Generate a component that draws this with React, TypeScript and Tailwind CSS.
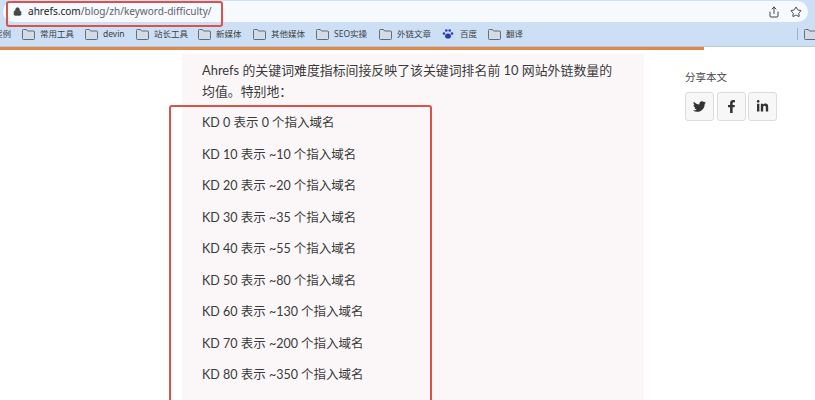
import React from 'react';
import { Lock, Share, Star } from 'lucide-react';
import { FaTwitter, FaFacebookF, FaLinkedinIn } from 'react-icons/fa';

const font = { fontFamily: '"Noto Sans", "Noto Sans CJK SC", sans-serif' };
const articleFont = { fontFamily: 'Lato, "Noto Sans CJK SC", sans-serif' };

const Folder: React.FC = () => (
  <svg width="13" height="11" viewBox="0 0 14 11" preserveAspectRatio="none" className="shrink-0" fill="#d3dbe6" stroke="#5f6670" strokeWidth="1">
    <path d="M.5 9.5V1.5a1 1 0 0 1 1-1h3.2l1.3 1.5h6.5a1 1 0 0 1 1 1v6.5a1 1 0 0 1-1 1h-11a1 1 0 0 1-1-1z" />
  </svg>
);

const bookmarks = [
  { label: '常用工具', w: 'w-[63px]' },
  { label: 'devin', w: 'w-[51px]' },
  { label: '站长工具', w: 'w-[62px]' },
  { label: '新媒体', w: 'w-[55px]' },
  { label: '其他媒体', w: 'w-[63px]' },
  { label: 'SEO实操', w: 'w-[63px]' },
  { label: '外链文章', w: 'w-[63px]' },
];

const rows = [
  'KD 0 表示 0 个指入域名',
  'KD 10 表示 ~10 个指入域名',
  'KD 20 表示 ~20 个指入域名',
  'KD 30 表示 ~35 个指入域名',
  'KD 40 表示 ~55 个指入域名',
  'KD 50 表示 ~80 个指入域名',
  'KD 60 表示 ~130 个指入域名',
  'KD 70 表示 ~200 个指入域名',
  'KD 80 表示 ~350 个指入域名',
  'KD 90 表示 ~700 个指入域名',
];

const App: React.FC = () => {
  return (
    <div className="relative h-[400px] w-[815px] overflow-hidden bg-white" style={font}>
      <header className="h-[47px] bg-[#cddff5] border-b border-[#b9c8dc]">
        <div className="flex h-[22px] pt-px">
          <div className="ml-[3px] mr-[7px] flex flex-1 items-center justify-between rounded-full bg-[#f6f9fd] pl-[10px] pr-[6px]">
            <div className="flex items-center gap-[6px] text-[10.05px] text-[#5f6368]">
              <Lock size={9} className="text-[#444]" fill="#444" />
              <span><span className="text-[#222]">ahrefs.com</span>/blog/zh/keyword-difficulty/</span>
            </div>
            <div className="flex items-center gap-[10px] text-[#444]">
              <Share size={12} />
              <Star size={12} />
            </div>
          </div>
        </div>
        <div className="flex h-[24px] items-center text-[8.5px] text-[#3c4043]">
          <span className="w-[22px] shrink-0 -ml-[11px] mr-[11px] text-right">案例</span>
          {bookmarks.map(b => (
            <div key={b.label} className={`flex shrink-0 items-center gap-[5px] ${b.w}`}>
              <Folder />
              <span className="whitespace-nowrap">{b.label}</span>
            </div>
          ))}
          <div className="flex w-[46px] shrink-0 items-center gap-[6px]">
            <svg width="12" height="12" viewBox="0 0 12 12" className="shrink-0" fill="#2b3bb5">
              <ellipse cx="6" cy="8" rx="3" ry="2.6" />
              <circle cx="2" cy="5.5" r="1.3" />
              <circle cx="10" cy="5.5" r="1.3" />
              <circle cx="4.3" cy="2.5" r="1.3" />
              <circle cx="7.7" cy="2.5" r="1.3" />
            </svg>
            <span>百度</span>
          </div>
          <div className="flex items-center gap-[5px]">
            <Folder />
            <span>翻译</span>
          </div>
          <div className="ml-auto flex items-center gap-[6px]">
            <div className="h-[12px] w-px bg-[#9fb0c6]" />
            <div className="w-[11px] overflow-hidden"><Folder /></div>
          </div>
        </div>
      </header>
      <div className="h-[3px] w-[704px] bg-[#e08a4a]" />
      <main className="mt-[4px] flex pl-[182px]">
        <article className="h-[346px] w-[462px] bg-[#fbf7f8] pl-[20px] pt-[6px] text-[#3a3a3a]" style={articleFont}>
          <p className="w-[420px] text-[12.9px] leading-[21px]">Ahrefs 的关键词难度指标间接反映了该关键词排名前 10 网站外链数量的均值。特别地：</p>
          <ul className="mt-[11px] text-[12.5px]">
            {rows.map(r => (
              <li key={r} className="h-[31.5px] leading-[20px]">{r}</li>
            ))}
          </ul>
        </article>
        <aside className="pl-[41px] pt-[15px]">
          <div className="text-[10.5px] leading-[16px] text-[#444]">分享本文</div>
          <div className="mt-[7px] flex gap-[2.5px]">
            {[FaTwitter, FaFacebookF, FaLinkedinIn].map((Icon, i) => (
              <div key={i} className="flex h-[29px] w-[29px] items-center justify-center rounded-[3px] border border-[#dcdcdc] bg-[#f7f7f7] text-[#333]">
                <Icon size={13} />
              </div>
            ))}
          </div>
        </aside>
      </main>
      {/* red annotation boxes */}
      <div className="absolute left-[6px] top-[1px] h-[26px] w-[217px] rounded-[3px] border-[2px] border-[#d9534a]" />
      <div className="absolute left-[169px] top-[105px] h-[320px] w-[263px] rounded-[3px] border-[2px] border-[#d9534a]" />
    </div>
  );
};

export default App;
